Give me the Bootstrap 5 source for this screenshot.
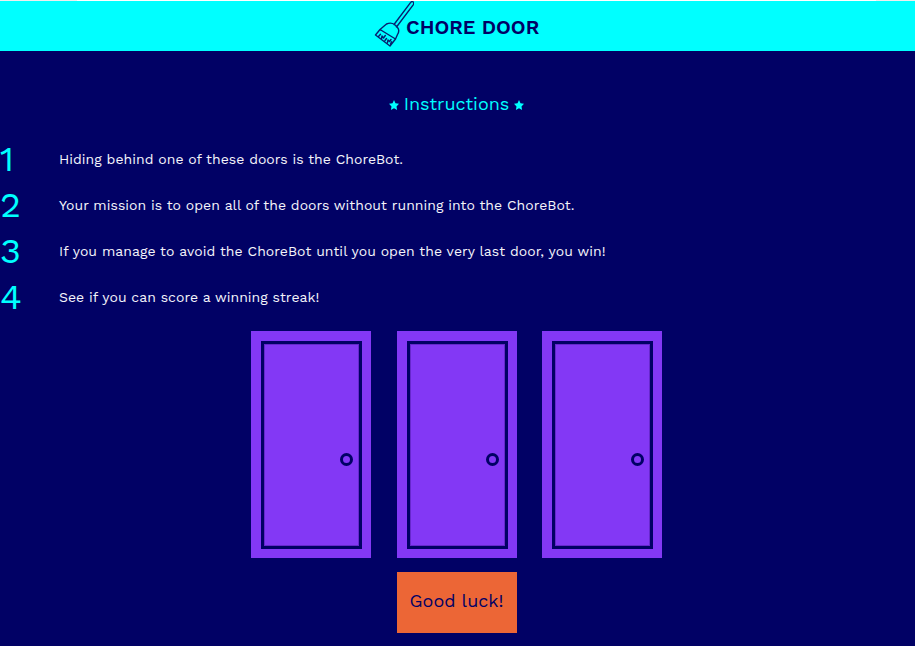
<!DOCTYPE html>
<html lang="en">
<head>
<meta charset="utf-8">
<title>Chore Door</title>
<link href="https://cdn.jsdelivr.net/npm/bootstrap@5.3.0/dist/css/bootstrap.min.css" rel="stylesheet">
<style>
body{background:#010165;color:#fff;font-family:"Work Sans",Inter,"Liberation Sans",sans-serif;height:646px;overflow:hidden}
.topline{height:1px;background:linear-gradient(90deg,#eee 77px,#fff 77px 876px,#eee 876px)}
.banner{height:50px;background:#0ff;color:#010165;padding-left:375px}
.broom{width:40px;height:46px;margin:-4px 0 0 -1px}
.title{font-size:20px;font-weight:600;line-height:24px;margin:1px 0 0 -8px}
.heading{height:24px;margin-top:41px;padding-right:2px;color:#0ff;font-size:18px;line-height:24px}
.heading span{width:107px}
.heading svg{margin-top:1px}
.rules{margin-top:20px}
.rule-item{height:46px}
.num{width:59px;color:#0ff;font-size:36px;line-height:46px}
.msg{font-size:14px;line-height:46px;letter-spacing:.03px;color:#f4f4fa}
.rule-item:nth-child(3) .msg{letter-spacing:.048px}
.doors{height:227px;margin-top:11px;padding-left:251px}
.door{width:120px;height:227px;background:#8338f5;padding:10px 9px 9px 10px}
.door + .door{margin-left:26px}
.door + .door + .door{margin-left:25px}
.panel{border:3px solid #010165;box-shadow:inset 0 0 0 1px #6628cc;padding-right:6px;padding-top:108px}
.knob{width:13px;height:13px;border:3px solid #010165;margin-top:1px}
.start{width:120px;height:61px;margin:14px 0 0 397px;background:#ec6636;color:#010165;font-size:18px}
.start span{display:block;height:61px;line-height:57px;padding-right:1px}
.start:hover{background:#ec6636;color:#010165}
</style>
</head>
<body>
<div class="topline"></div>
<header class="banner d-flex align-items-center">
  <svg class="broom flex-shrink-0" viewBox="0 0 40 46" fill="none" stroke="#07206f" stroke-width="1.4" stroke-linejoin="round" stroke-linecap="round"><path d="M20 23.500 36.500 1.600Q38-.2 39.200.9T39.200 3.800L22.500 26M12.500 23Q17 21 20.500 23.500L23.500 26.500Q26 29.300 23.500 33.500L21.500 38 16 45 1.500 34 6 28.500ZM6 28.500 21.500 38M4.500 35.500 6.500 33.200M7.500 37.500 8 35 9.500 37 11.300 34.500M11 39.500 12.500 37.500M13.500 41.500 14 39 15.500 40.500 17 38.500M16.500 43 17.500 40.800"/></svg>
  <h1 class="title text-nowrap">CHORE DOOR</h1>
</header>
<main>
  <h2 class="heading d-flex justify-content-center align-items-center mb-0 fw-normal">
    <svg width="10" height="10" viewBox="0 0 10 10" fill="#0ff"><path d="M5 0 6.500 3.300 10 3.800 7.500 6.400 8.100 10 5 8.200 1.900 10 2.500 6.400 0 3.800 3.500 3.300Z"/></svg>
    <span class="mx-1 text-center text-nowrap">Instructions</span>
    <svg width="10" height="10" viewBox="0 0 10 10" fill="#0ff"><path d="M5 0 6.500 3.300 10 3.800 7.500 6.400 8.100 10 5 8.200 1.900 10 2.500 6.400 0 3.800 3.500 3.300Z"/></svg>
  </h2>
  <div class="rules">
    <div class="rule-item d-flex"><div class="num">1</div><div class="msg">Hiding behind one of these doors is the ChoreBot.</div></div>
    <div class="rule-item d-flex"><div class="num">2</div><div class="msg">Your mission is to open all of the doors without running into the ChoreBot.</div></div>
    <div class="rule-item d-flex"><div class="num">3</div><div class="msg">If you manage to avoid the ChoreBot until you open the very last door, you win!</div></div>
    <div class="rule-item d-flex"><div class="num">4</div><div class="msg">See if you can score a winning streak!</div></div>
  </div>
  <div class="doors d-flex">
    <div class="door"><div class="panel h-100 d-flex justify-content-end"><div class="knob rounded-circle"></div></div></div>
    <div class="door"><div class="panel h-100 d-flex justify-content-end"><div class="knob rounded-circle"></div></div></div>
    <div class="door"><div class="panel h-100 d-flex justify-content-end"><div class="knob rounded-circle"></div></div></div>
  </div>
  <button class="start btn rounded-0 border-0 p-0 d-block text-nowrap"><span>Good luck!</span></button>
</main>
<script src="https://cdn.jsdelivr.net/npm/bootstrap@5.3.0/dist/js/bootstrap.bundle.min.js"></script>
</body>
</html>
